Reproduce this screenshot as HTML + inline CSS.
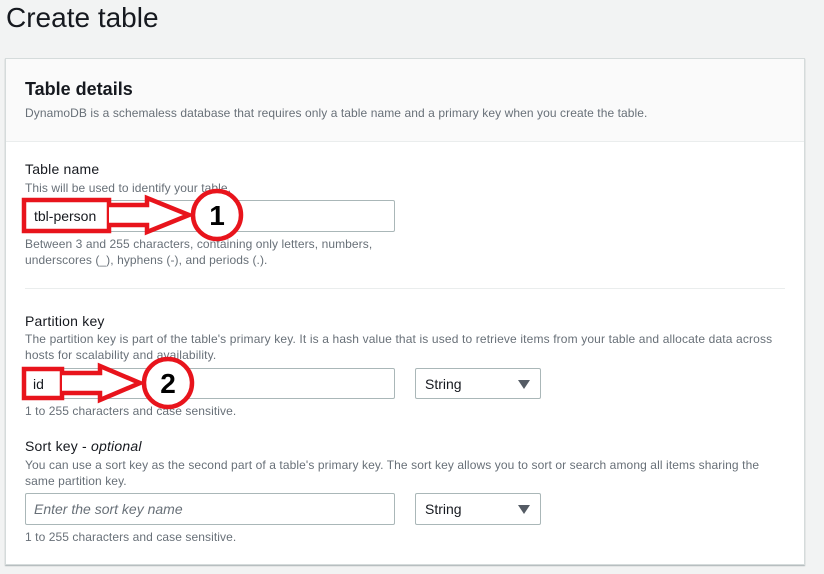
<!DOCTYPE html>
<html><head><meta charset="utf-8"><style>
*{box-sizing:border-box;margin:0;padding:0}
body{width:824px;height:574px;background:#f2f3f3;font-family:"Liberation Sans",sans-serif;position:relative;overflow:hidden;color:#16191f}
.a{position:absolute;white-space:nowrap}
.card{position:absolute;left:5px;top:58px;width:800px;height:507px;background:#fff;border:1px solid #d5dbdb;box-shadow:0 1px 1px rgba(0,28,36,.3)}
.hd{position:absolute;left:0;top:0;width:798px;height:83px;background:#fafafa;border-bottom:1px solid #eaeded}
.lbl{font-size:14px;color:#16191f;letter-spacing:0.2px}
.desc{font-size:12px;color:#687078;line-height:16px;letter-spacing:0.08px}
.inp{position:absolute;background:#fff;border:1px solid #aab7b8;border-radius:2px;font-size:14px;padding-left:8px;display:flex;align-items:center}
.sel{position:absolute;background:#fff;border:1px solid #aab7b8;border-radius:2px;font-size:14px;padding-left:9px;display:flex;align-items:center}
.sel:after{content:"";position:absolute;right:10px;top:11px;border-left:6px solid transparent;border-right:6px solid transparent;border-top:9px solid #545b64}
</style></head><body>
<div class="a" style="left:6px;top:2px;font-size:28px;color:#16191f">Create table</div>
<div class="card"><div class="hd"></div></div>
<div class="a" style="left:25px;top:79px;font-size:18px;font-weight:bold">Table details</div>
<div class="a desc" style="left:25px;top:105px">DynamoDB is a schemaless database that requires only a table name and a primary key when you create the table.</div>

<div class="a lbl" style="left:25px;top:161px">Table name</div>
<div class="a desc" style="left:25px;top:180px">This will be used to identify your table.</div>
<div class="inp" style="left:25px;top:200px;width:370px;height:32px"></div>
<div class="a desc" style="left:25px;top:236px">Between 3 and 255 characters, containing only letters, numbers,<br>underscores (_), hyphens (-), and periods (.).</div>
<div class="a" style="left:25px;top:288px;width:760px;height:1px;background:#eaeded"></div>

<div class="a lbl" style="left:25px;top:313px">Partition key</div>
<div class="a desc" style="left:25px;top:331px;letter-spacing:0.14px">The partition key is part of the table's primary key. It is a hash value that is used to retrieve items from your table and allocate data across<br>hosts for scalability and availability.</div>
<div class="inp" style="left:25px;top:368px;width:370px;height:31px"></div>
<div class="sel" style="left:415px;top:368px;width:126px;height:31px">String</div>
<div class="a desc" style="left:25px;top:403px">1 to 255 characters and case sensitive.</div>

<div class="a lbl" style="left:25px;top:438px">Sort key - <i>optional</i></div>
<div class="a desc" style="left:25px;top:457px;letter-spacing:0.1px">You can use a sort key as the second part of a table's primary key. The sort key allows you to sort or search among all items sharing the<br>same partition key.</div>
<div class="inp" style="left:25px;top:493px;width:370px;height:32px;color:#687078;font-style:italic">Enter the sort key name</div>
<div class="sel" style="left:415px;top:493px;width:126px;height:32px">String</div>
<div class="a desc" style="left:25px;top:529px">1 to 255 characters and case sensitive.</div>

<svg class="a" style="left:0;top:0" width="824" height="574">
<g fill="#fff" stroke="#e8141c" stroke-width="4.5">
<rect x="24" y="200" width="85" height="31"/>
<path d="M109 205 H147 V198 L189 215 L147 232 V225 H109"/>
<circle cx="217" cy="215" r="24"/>
<rect x="24" y="369" width="38" height="29"/>
<path d="M62 373 H100 V366 L140 383 L100 400 V393 H62"/>
<circle cx="168" cy="383" r="24"/>
</g>
<text x="34" y="221" font-size="14" font-family="Liberation Sans" fill="#16191f">tbl-person</text>
<text x="33" y="389" font-size="14" font-family="Liberation Sans" fill="#16191f">id</text>
<text x="217" y="225" font-size="28" font-weight="bold" text-anchor="middle" font-family="Liberation Sans" fill="#000">1</text>
<text x="168" y="393" font-size="28" font-weight="bold" text-anchor="middle" font-family="Liberation Sans" fill="#000">2</text>
</svg>
</body></html>
